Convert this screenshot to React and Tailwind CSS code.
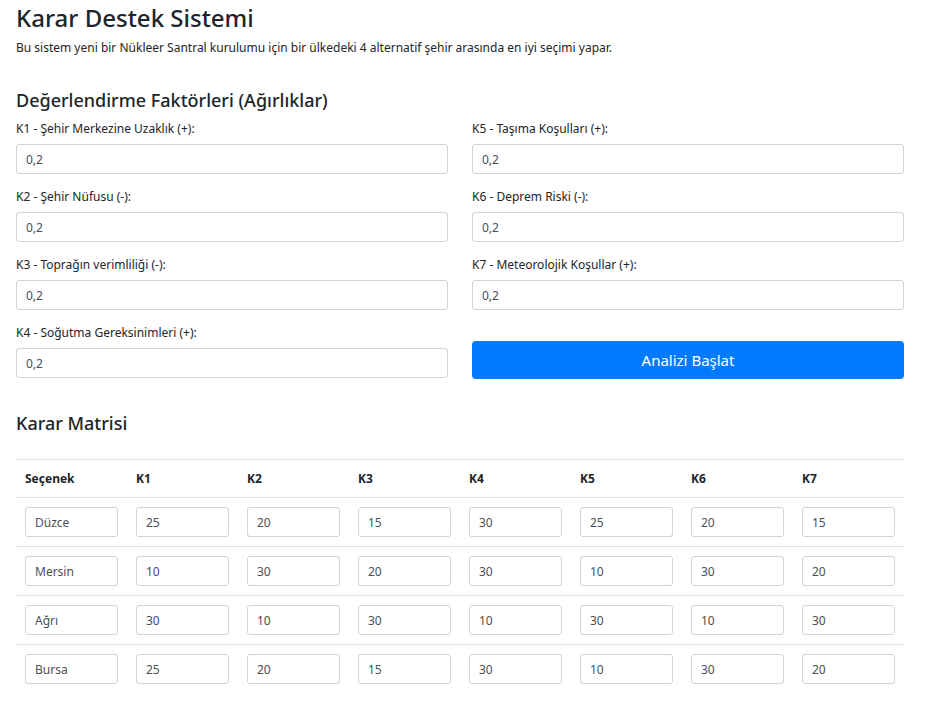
import { useState } from "react";

const factors = [
  { id: "K1", label: "K1 - Şehir Merkezine Uzaklık (+):" },
  { id: "K5", label: "K5 - Taşıma Koşulları (+):" },
  { id: "K2", label: "K2 - Şehir Nüfusu (-):" },
  { id: "K6", label: "K6 - Deprem Riski (-):" },
  { id: "K3", label: "K3 - Toprağın verimliliği (-):" },
  { id: "K7", label: "K7 - Meteorolojik Koşullar (+):" },
  { id: "K4", label: "K4 - Soğutma Gereksinimleri (+):" },
];

const initialRows = [
  { name: "Düzce", values: [25, 20, 15, 30, 25, 20, 15] },
  { name: "Mersin", values: [10, 30, 20, 30, 10, 30, 20] },
  { name: "Ağrı", values: [30, 10, 30, 10, 30, 10, 30] },
  { name: "Bursa", values: [25, 20, 15, 30, 10, 30, 20] },
];

const inputClass =
  "h-[30px] w-full rounded-[3px] border border-[#ced4da] bg-white px-[9px] text-[12px] text-[#495057] outline-none focus:border-[#80bdff]";

function Field({ label, value, onChange }) {
  return (
    <div className="flex flex-col">
      <label className="mb-[6px] text-[12px] leading-[18px] text-[#212529]">{label}</label>
      <input type="text" value={value} onChange={(e) => onChange(e.target.value)} className={inputClass} />
    </div>
  );
}

export default function App() {
  const [weights, setWeights] = useState(Object.fromEntries(factors.map((f) => [f.id, "0,2"])));
  const [rows, setRows] = useState(initialRows);

  function updateCell(rowIndex, colIndex, raw) {
    setRows((current) =>
      current.map((row, i) => {
        if (i !== rowIndex) return row;
        if (colIndex === -1) return { ...row, name: raw };
        const values = [...row.values];
        values[colIndex] = raw;
        return { ...row, values };
      })
    );
  }

  return (
    <div className="min-h-screen bg-white pb-6 pl-4 pr-[23px] text-[#212529]" style={{ fontFamily: '"Noto Sans", "Open Sans", sans-serif' }}>
      <h1 className="pt-[3px] text-[24px] font-medium leading-[30px]">Karar Destek Sistemi</h1>
      <p className="mt-[6px] text-[12px] leading-[18px]">Bu sistem yeni bir Nükleer Santral kurulumu için bir ülkedeki 4 alternatif şehir arasında en iyi seçimi yapar.</p>

      <h2 className="mt-[31px] text-[18px] font-medium leading-[24px]">Değerlendirme Faktörleri (Ağırlıklar)</h2>
      <div className="mt-[8px] grid grid-cols-2 gap-x-6 gap-y-[14px]">
        {factors.map((f) => (
          <Field key={f.id} label={f.label} value={weights[f.id]} onChange={(v) => setWeights((c) => ({ ...c, [f.id]: v }))} />
        ))}
        <div className="flex items-end">
          <button type="button" className="mb-[-1px] h-[38px] w-full rounded-[4px] bg-[#007bff] text-[15px] text-white hover:bg-[#0069d9]">
            Analizi Başlat
          </button>
        </div>
      </div>

      <h2 className="mt-[33px] text-[18px] font-medium leading-[24px]">Karar Matrisi</h2>
      <table className="mt-[24px] w-full table-fixed border-collapse">
        <thead>
          <tr className="border-t border-b border-[#dee2e6]">
            <th className="h-[38px] px-[9px] text-left text-[12px] font-bold">Seçenek</th>
            {["K1", "K2", "K3", "K4", "K5", "K6", "K7"].map((k) => (
              <th key={k} className="h-[38px] px-[9px] text-left text-[12px] font-bold">{k}</th>
            ))}
          </tr>
        </thead>
        <tbody>
          {rows.map((row, ri) => (
            <tr key={ri} className={ri < rows.length - 1 ? "border-b border-[#dee2e6]" : ""}>
              <td className="h-[49px] px-[9px]">
                <input type="text" value={row.name} onChange={(e) => updateCell(ri, -1, e.target.value)} className={inputClass} />
              </td>
              {row.values.map((v, ci) => (
                <td key={ci} className="h-[49px] px-[9px]">
                  <input type="text" value={v} onChange={(e) => updateCell(ri, ci, e.target.value)} className={inputClass} />
                </td>
              ))}
            </tr>
          ))}
        </tbody>
      </table>
    </div>
  );
}
